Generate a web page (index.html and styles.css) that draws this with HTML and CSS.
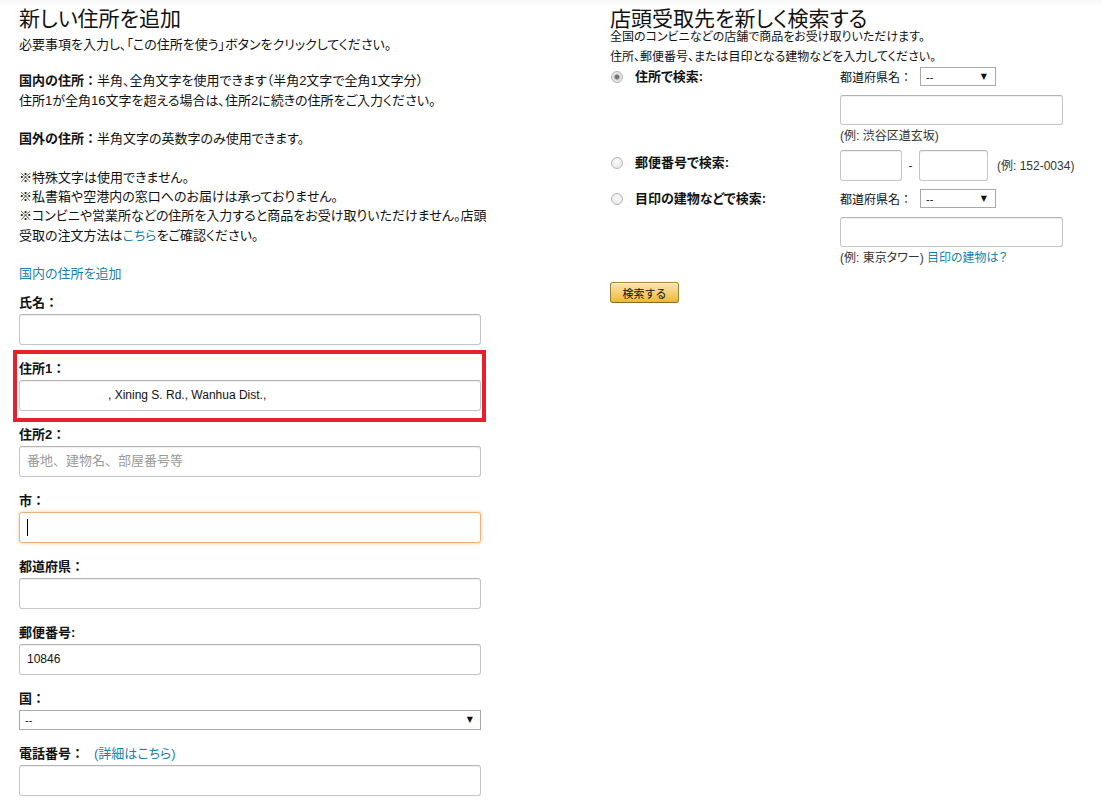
FILE: index.html
```html
<!DOCTYPE html>
<html lang="ja">
<head>
<meta charset="utf-8">
<title>新しい住所を追加</title>
<link rel="stylesheet" href="styles.css">
</head>
<body>
<div class="page">
  <section class="col-left">
    <h1 class="title">新しい住所を追加</h1>
    <p class="intro first">必要事項を入力し、「この住所を使う」ボタンをクリックしてください。</p>
    <p class="intro"><b>国内の住所：</b>半角、全角文字を使用できます（半角2文字で全角1文字分）<br>住所1が全角16文字を超える場合は、住所2に続きの住所をご入力ください。</p>
    <p class="intro"><b>国外の住所：</b>半角文字の英数字のみ使用できます。</p>
    <p class="intro">※特殊文字は使用できません。<br>※私書箱や空港内の窓口へのお届けは承っておりません。<br>※コンビニや営業所などの住所を入力すると商品をお受け取りいただけません。店頭<br>受取の注文方法は<a href="#" class="link">こちら</a>をご確認ください。</p>
    <p class="intro add"><a href="#" class="link">国内の住所を追加</a></p>

    <div class="field">
      <label class="label">氏名：</label>
      <input class="input" type="text">
    </div>
    <div class="field highlighted">
      <label class="label">住所1：</label>
      <input class="input redacted" type="text" value=", Xining S. Rd., Wanhua Dist.,">
      <span class="mark"></span>
    </div>
    <div class="field">
      <label class="label">住所2：</label>
      <input class="input" type="text" placeholder="番地、建物名、部屋番号等">
    </div>
    <div class="field">
      <label class="label">市：</label>
      <div class="caret-wrap">
        <input class="input focused" type="text">
        <span class="caret"></span>
      </div>
    </div>
    <div class="field">
      <label class="label">都道府県：</label>
      <input class="input" type="text">
    </div>
    <div class="field">
      <label class="label">郵便番号:</label>
      <input class="input" type="text" value="10846">
    </div>
    <div class="field">
      <label class="label">国：</label>
      <div class="select wide"><span>--</span><span class="arrow">▼</span></div>
    </div>
    <div class="field">
      <label class="label">電話番号：<a href="#" class="link normal">(詳細はこちら)</a></label>
      <input class="input" type="text">
    </div>
  </section>

  <section class="col-right">
    <h2 class="title right-title">店頭受取先を新しく検索する</h2>
    <p class="sub">全国のコンビニなどの店舗で商品をお受け取りいただけます。</p>
    <p class="sub">住所、郵便番号、または目印となる建物などを入力してください。</p>

    <div class="row row-a">
      <div class="opt"><span class="radio checked"></span><span class="opt-label">住所で検索:</span></div>
      <div class="opt-body">
        <div class="pref"><span class="pref-label">都道府県名：</span><div class="select small"><span>--</span><span class="arrow">▼</span></div></div>
        <input class="input r-wide" type="text">
        <div class="example">(例: 渋谷区道玄坂)</div>
      </div>
    </div>

    <div class="row row-b">
      <div class="opt"><span class="radio"></span><span class="opt-label">郵便番号で検索:</span></div>
      <div class="opt-body zip">
        <input class="input zip1" type="text">
        <span class="dash">-</span>
        <input class="input zip2" type="text">
        <span class="example inline">(例: 152-0034)</span>
      </div>
    </div>

    <div class="row row-c">
      <div class="opt"><span class="radio"></span><span class="opt-label">目印の建物などで検索:</span></div>
      <div class="opt-body">
        <div class="pref"><span class="pref-label">都道府県名：</span><div class="select small"><span>--</span><span class="arrow">▼</span></div></div>
        <input class="input r-wide" type="text">
        <div class="example">(例: 東京タワー) <a href="#" class="link">目印の建物は？</a></div>
      </div>
    </div>

    <button class="btn" type="button">検索する</button>
  </section>
</div>
</body>
</html>
```

FILE: styles.css
```css
* { box-sizing: border-box; }

html, body {
  margin: 0;
  padding: 0;
  background: #fff;
}

body {
  font-family: "Liberation Sans", "Noto Sans CJK JP", sans-serif;
  color: #111;
  font-feature-settings: "palt";
}

.page {
  display: flex;
  gap: 129px;
  padding: 6px 0 0 19px;
  background: linear-gradient(to bottom, #f7f7f7 0, #ffffff 8px) no-repeat;
}

.col-left {
  width: 462px;
  flex: none;
}

.col-right {
  width: 470px;
  flex: none;
}

.title {
  margin: 0 0 3px;
  font-size: 21px;
  line-height: 26px;
  font-weight: normal;
  color: #111;
}

.right-title {
  margin: 3px 0 -2px;
  line-height: 20px;
  font-size: 21px;
}

.intro {
  margin: 0 0 19px;
  font-size: 13px;
  line-height: 19.4px;
  white-space: nowrap;
}

.intro.first { margin-bottom: 17px; }
.intro.add { margin-bottom: 9px; }

.intro b {
  font-weight: bold;
  font-feature-settings: normal;
}

.link {
  color: #1d7fab;
  text-decoration: none;
}

.link.normal {
  font-weight: normal;
  font-feature-settings: "palt";
  margin-left: 10px;
}

.field {
  margin-bottom: 14px;
}

.label {
  display: block;
  font-size: 13px;
  line-height: 19px;
  font-weight: bold;
  margin-bottom: 2px;
  font-feature-settings: normal;
}

.input {
  display: block;
  width: 100%;
  height: 31px;
  margin: 0;
  padding: 0 7px;
  border: 1px solid #c6c6c6;
  border-top-color: #b3b3b3;
  border-radius: 3px;
  box-shadow: inset 0 1px 0 rgba(0, 0, 0, 0.06);
  background: #fff;
  font-family: "Liberation Sans", "Noto Sans CJK JP", sans-serif;
  font-size: 12px;
  color: #111;
  outline: none;
}

.input::placeholder {
  color: #9a9a9a;
  font-size: 13px;
}

.input.redacted {
  padding-left: 88px;
}

.input.focused {
  border-color: #eab27a;
  box-shadow: 0 0 3px 1px rgba(240, 160, 80, 0.35);
}

.highlighted {
  position: relative;
}

.mark {
  position: absolute;
  left: -6px;
  right: -5px;
  top: -9px;
  bottom: -11px;
  border: 4px solid #e5222b;
  pointer-events: none;
}

.caret-wrap {
  position: relative;
}

.caret {
  position: absolute;
  left: 8px;
  top: 7px;
  width: 1px;
  height: 17px;
  background: #000;
}

.select {
  display: flex;
  align-items: center;
  justify-content: space-between;
  height: 20px;
  padding: 0 7px 0 5px;
  border: 1px solid #a9a9a9;
  background: #fff;
  font-size: 11px;
  color: #111;
}

.select.wide {
  width: 100%;
  margin-top: 2px;
}

.arrow {
  font-family: "DejaVu Sans", sans-serif;
  font-size: 8px;
  line-height: 1;
  color: #111;
}

.select.small {
  width: 76px;
  height: 19px;
  padding-right: 8px;
  flex: none;
}

/* right column */
.sub {
  margin: 0;
  font-size: 12px;
  line-height: 20px;
}

.row {
  display: flex;
}

.opt {
  width: 230px;
  flex: none;
  display: flex;
  align-items: center;
  height: 19px;
}

.row-b .opt { margin-top: 3px; }

.radio {
  width: 12px;
  height: 12px;
  border-radius: 50%;
  border: 1px solid #b5b5b5;
  background: radial-gradient(circle at 50% 40%, #fbfbfb 0, #e3e3e3 100%);
  margin: 0 12px 0 1px;
  flex: none;
}

.radio.checked {
  background: radial-gradient(circle, #6e6e6e 0, #7a7a7a 2px, #dcdcdc 3px, #f0f0f0 100%);
}

.opt-label {
  font-size: 13px;
  font-weight: bold;
  line-height: 19px;
}

.opt-body {
  flex: none;
  width: 240px;
}

.pref {
  display: flex;
  align-items: center;
  gap: 8px;
  height: 19px;
  font-size: 12px;
}

.pref-label {
  font-feature-settings: normal;
}

.r-wide {
  width: 223px;
  height: 30px;
  margin-top: 9px;
}

.example {
  font-size: 12px;
  line-height: 20px;
  color: #333;
  margin-top: 1px;
}

.row-b { margin-top: 4px; }

.zip {
  display: flex;
  align-items: center;
  width: 260px;
}

.zip1 { width: 62px; }
.zip2 { width: 69px; }

.dash {
  width: 17px;
  text-align: center;
  font-size: 12px;
  color: #333;
}

.example.inline {
  margin: 0 0 0 9px;
  white-space: nowrap;
}

.row-c { margin-top: 8px; }

.btn {
  display: block;
  margin-top: 14px;
  width: 69px;
  height: 21px;
  padding: 0;
  border: 1px solid;
  border-color: #a88734 #9c7e31 #846a29;
  border-radius: 3px;
  background: linear-gradient(to bottom, #f8e3ad 0, #f5d27d 45%, #eeb933 100%);
  box-shadow: inset 0 1px 0 rgba(255, 255, 255, 0.5);
  font-family: "Liberation Sans", "Noto Sans CJK JP", sans-serif;
  font-size: 11px;
  color: #111;
  cursor: pointer;
}
```
